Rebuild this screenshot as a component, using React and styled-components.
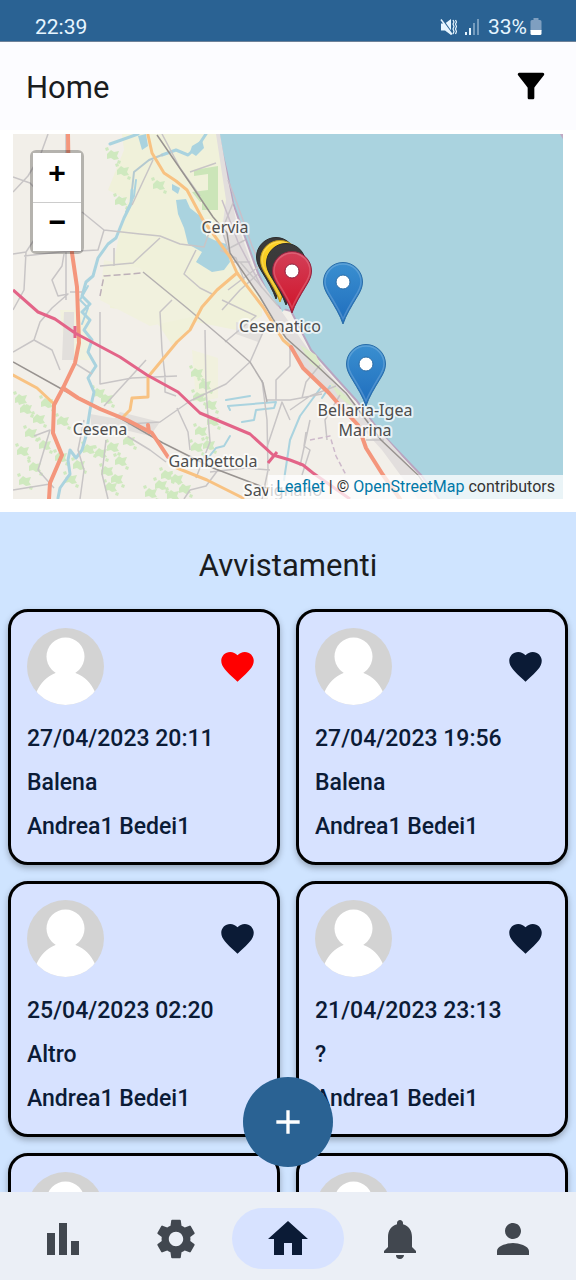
import React from "react";
import styled, { createGlobalStyle } from "styled-components";
import {
  MdAdd,
  MdBarChart,
  MdFavorite,
  MdFilterAlt,
  MdHome,
  MdNotifications,
  MdPerson,
  MdSettings,
} from "react-icons/md";

const GlobalStyle = createGlobalStyle`
  *, *::before, *::after { box-sizing: border-box; }
  body {
    margin: 0;
    font-family: Roboto, "Noto Sans", sans-serif;
    color: #1a1c1e;
    background: #fff;
  }
  button { font: inherit; border: 0; padding: 0; background: none; cursor: pointer; }
  h1, h2, p, ul { margin: 0; padding: 0; font-weight: 400; }
`;

const Screen = styled.div`
  position: relative;
  display: flex;
  flex-direction: column;
  height: 100vh;
  overflow: hidden;
`;

const StatusBar = styled.div`
  display: flex;
  flex: none;
  align-items: flex-end;
  justify-content: space-between;
  height: 42px;
  padding: 0 34px 3px 35px;
  background: #2a6293;
  border-bottom: 1px solid #6d8299;
  color: #e6f5ff;
  font-size: 21px;
  line-height: 22px;
`;

const StatusIcons = styled.div`
  display: flex;
  align-items: center;
  gap: 8px;
`;

const BatteryLevel = styled.span`
  display: flex;
  align-items: center;
  gap: 3px;
`;

const TopBar = styled.header`
  display: flex;
  flex: none;
  align-items: center;
  justify-content: space-between;
  height: 88px;
  padding: 0 24px 0 26px;
  background: #fcfcff;
`;

const Title = styled.h1`
  padding-top: 4px;
  font-size: 31px;
  line-height: 40px;
`;

const IconButton = styled.button`
  display: flex;
  align-items: center;
  justify-content: center;
  width: ${({ $size }) => $size}px;
  height: ${({ $size }) => $size}px;
  color: ${({ $color }) => $color};
`;

const MapPanel = styled.section`
  flex: none;
  padding: 4px 13px 13px;
  background: #fff;
`;

const MapFrame = styled.div`
  position: relative;
  overflow: hidden;
  background: #aad3df;
`;

const MapDrawing = styled.svg`
  display: block;
  width: 100%;
  height: auto;
`;

const MapLabel = styled.text`
  font-family: "Noto Sans", sans-serif;
  font-size: 16px;
  fill: #4d4d4d;
  stroke: rgba(255, 255, 255, 0.7);
  stroke-width: 4px;
  stroke-linejoin: round;
  paint-order: stroke;
  text-anchor: middle;
`;

const ZoomControl = styled.div`
  position: absolute;
  top: 16px;
  left: 17px;
  display: flex;
  flex-direction: column;
  border: 3px solid rgba(0, 0, 0, 0.25);
  border-radius: 6px;
  background-clip: padding-box;
`;

const ZoomButton = styled.button`
  && {
    width: 48px;
    height: 49px;
    padding-bottom: 6px;
    background: #fff;
    color: #000;
    font: bold 30px/40px "Liberation Mono", monospace;
  }
  & + & {
    border-top: 1px solid #ccc;
  }
`;

const Attribution = styled.div`
  position: absolute;
  right: 0;
  bottom: 0;
  padding: 0 8px;
  background: rgba(255, 255, 255, 0.75);
  color: #333;
  font-size: 16px;
  line-height: 24px;
  white-space: nowrap;

  a {
    color: #0078a8;
    text-decoration: none;
  }
`;

const Sightings = styled.main`
  flex: 1;
  min-height: 0;
  overflow-y: auto;
  scrollbar-width: none;
  padding: 32px 8px 16px;
  background: #cfe4ff;
`;

const SectionTitle = styled.h2`
  font-size: 31px;
  line-height: 44px;
  text-align: center;
`;

const CardGrid = styled.ul`
  display: grid;
  grid-template-columns: repeat(2, minmax(0, 1fr));
  gap: 16px;
  margin-top: 21px;
  list-style: none;
`;

const Card = styled.li`
  padding: 16px 16px 13px;
  border: 3px solid #000;
  border-radius: 20px;
  background: #d7e2ff;
  box-shadow: 0 3px 6px rgba(0, 0, 0, 0.28);
  color: #0b1b36;
`;

const CardTop = styled.div`
  display: flex;
  align-items: center;
  justify-content: space-between;
  margin-bottom: 12px;
`;

const CardLine = styled.p`
  font-size: 23px;
  font-weight: 500;
  line-height: 44px;
`;

const AddButton = styled.button`
  && {
    position: absolute;
    bottom: 113px;
    left: 50%;
    display: flex;
    align-items: center;
    justify-content: center;
    width: 90px;
    height: 90px;
    margin-left: -45px;
    border-radius: 50%;
    background: #2a6293;
    color: #fff;
  }
`;

const BottomNav = styled.nav`
  display: flex;
  flex: none;
  align-items: flex-start;
  height: 88px;
  padding: 16px 7px 0;
  background: #ebeff6;
`;

const NavButton = styled.button`
  && {
    display: flex;
    flex: 1;
    align-items: center;
    justify-content: center;
    height: 61px;
    border-radius: 31px;
    background: ${({ $active }) => ($active ? "#d7e2ff" : "transparent")};
    color: ${({ $active }) => ($active ? "#0b1b36" : "#41474f")};
  }
`;

const sightings = [
  { id: 1, date: "27/04/2023 20:11", kind: "Balena", author: "Andrea1 Bedei1", liked: true },
  { id: 2, date: "27/04/2023 19:56", kind: "Balena", author: "Andrea1 Bedei1" },
  { id: 3, date: "25/04/2023 02:20", kind: "Altro", author: "Andrea1 Bedei1" },
  { id: 4, date: "21/04/2023 23:13", kind: "?", author: "Andrea1 Bedei1" },
  { id: 5, date: "", kind: "", author: "" },
  { id: 6, date: "", kind: "", author: "" },
];

const navItems = [
  { label: "Statistiche", Icon: MdBarChart },
  { label: "Impostazioni", Icon: MdSettings },
  { label: "Home", Icon: MdHome, active: true },
  { label: "Notifiche", Icon: MdNotifications },
  { label: "Profilo", Icon: MdPerson },
];

function MuteIcon() {
  return (
    <svg width="17" height="18" viewBox="0 0 17 18" fill="none" aria-hidden="true">
      <path d="M1 5.500h4l6-4.500v16L5 12.500H1z" fill="#e6f5ff" />
      <path d="M2 1 12 15" stroke="#2a6293" strokeWidth="1.500" />
      <path d="M1 1.500l11 15" stroke="#e6f5ff" strokeWidth="1.500" />
      <path d="M13 2l1 2-1 2 1 2.500-1 2.500 1 2.500-1 2.500M15.500 2l1 2-1 2 1 2.500-1 2.500 1 2.500-1 2.500" stroke="#e6f5ff" strokeWidth="1.200" />
    </svg>
  );
}

function SignalIcon() {
  return (
    <svg width="15" height="18" viewBox="0 0 15 18" fill="#e6f5ff" aria-hidden="true">
      <path d="M0 14h2v3H0zM4 10h2v7H4z" />
      <path d="M8 5h2v12H8zM12 1h2v16h-2z" opacity=".4" />
    </svg>
  );
}

function BatteryIcon() {
  return (
    <svg width="12" height="18" viewBox="0 0 12 18" aria-hidden="true">
      <path d="M3.500 0h5v2H10a1.500 1.500 0 0 1 1.500 1.500V13H.5V3.500A1.500 1.500 0 0 1 2 2h1.500z" fill="#7f9fc0" />
      <path d="M.5 12h11v3.500A1.500 1.500 0 0 1 10 17H2a1.500 1.500 0 0 1-1.500-1.500z" fill="#fff" />
    </svg>
  );
}

function Avatar() {
  const clip = React.useId();
  return (
    <svg width="77" height="77" viewBox="0 0 77 77" aria-hidden="true">
      <clipPath id={clip}>
        <circle cx="38.5" cy="38.5" r="38.5" />
      </clipPath>
      <g clipPath={`url(#${clip})`}>
        <path d="M0 0h77v77H0z" fill="#d3d3d3" />
        <circle cx="38.5" cy="28.500" r="19" fill="#fff" />
        <path d="M28.500 42h20v3C58 48.500 64 55 68 64L60 78H17L9.500 64C13.500 55 19.500 48.500 28.500 45z" fill="#fff" />
      </g>
    </svg>
  );
}

const pinColors = {
  blue: ["#3a8fd0", "#1f6dbd", "#2a6da8"],
  red: ["#d33f58", "#d0142a", "#8e2340"],
  black: ["#3c3c3c", "#333333", "#2c2c2c"],
  yellow: ["#ffd326", "#e8bf1c", "#c19c1c"],
};

function Pin({ x, y, color }) {
  return (
    <g transform={`translate(${x} ${y})`}>
      <path
        d="M0 62C-3 53-8 45-14 35C-17.500 29.500-19.500 25-19.500 20A19.500 19.500 0 0 1 19.500 20C19.500 25 17.500 29.500 14 35C8 45 3 53 0 62Z"
        fill={`url(#pin-${color})`}
        stroke={pinColors[color][2]}
        strokeWidth="1"
      />
      <path
        d="M0 57C-3 50-7 43-12.500 34C-16 28.500-18 24.500-18 20A18 18 0 0 1 18 20C18 24.500 16 28.500 12.500 34C7 43 3 50 0 57Z"
        fill="none"
        stroke="#fff"
        strokeOpacity={color === "black" ? 0 : 0.18}
        strokeWidth="1.500"
      />
      <circle cy="20" r="7" fill="#fff" stroke={pinColors[color][2]} strokeWidth="1" />
    </g>
  );
}

const woods = [
  [25, 408], [38, 418], [30, 432], [44, 444], [22, 450], [34, 466], [24, 480], [46, 402], [70, 478],
  [78, 464], [88, 448], [100, 452], [112, 446], [120, 460], [106, 470], [116, 478], [128, 440],
  [160, 484], [150, 492], [172, 494], [184, 488], [166, 474], [62, 420], [98, 392], [106, 398],
  [196, 372], [204, 384], [198, 396], [210, 404], [212, 420], [200, 430], [208, 444], [196, 446],
  [122, 170], [112, 154], [158, 184], [120, 200], [176, 478], [110, 486], [20, 398], [60, 456],
];

function CoastMap() {
  return (
    <MapDrawing viewBox="13 134 550 365" role="img" aria-label="Mappa della costa adriatica">
      <defs>
        {Object.entries(pinColors).map(([name, [top, bottom]]) => (
          <linearGradient key={name} id={`pin-${name}`} x1="0" y1="0" x2="0" y2="1">
            <stop offset="0" stopColor={top} />
            <stop offset="1" stopColor={bottom} />
          </linearGradient>
        ))}
      </defs>
      <path d="M13 134h550v365H13z" fill="#aad3df" />
      <path d="M564 134h-4l4 7z" fill="#c2a9c4" />
      <path
        d="M10 130H218L222 152L227 173L233 203L245 237L258 273L270 298L280 308L291 311L311 350L336 378L356 400L381 433L399 452L421 475L442 503H10Z"
        fill="#f2efe9"
        stroke="#b9a5c0"
        strokeWidth="2"
      />
      {/* cultivated plain between the river and the beach */}
      <path
        d="M122 134H218L222 160L228 190L220 240L232 262L262 300L262 316L236 330L196 322L172 345L150 312L110 308L112 268L120 232L128 200L108 190L124 150Z"
        fill="#f0f1da"
      />
      <path d="M104 260L140 268L196 316L150 326L100 300ZM60 310h30v50H66zM192 350l26 8v40l-22 4z" fill="#f1f1de" />
      <path d="M194 170l24-4v32l-18 4-8-10 16-2v-16l-14 2zM202 200l16-2v12h-16z" fill="#cbe5b8" />
      <path d="M216 134h4L228 180L236 220L254 270L282 312L310 352L350 398L400 454L434 499H418L382 450L340 404L300 362L262 300L232 258L222 230L226 200Z" fill="#e2dedd" />
      <path d="M300 345l16 10 8 18-14-10zM330 382l16 14 10 14-18-14z" fill="#dcebc8" />
      <path d="M64 312h10v48H62zM120 412l40 10-10 14-42-10zM236 322l30 6-8 14-22-8zM90 414l34 6v12l-32-2z" fill="#e2dfdc" />
      {woods.map(([x, y]) => (
        <path
          key={`${x}-${y}`}
          d={`M${x - 5} ${y}l4-4 3 2 5-1-2 5 2 3-5 1-3-2-4 1zM${x + 6} ${y + 6}l3 1-1 3-3-1zM${x - 7} ${y - 6}l3-1 1 3-3 1z`}
          fill="#cfe9bf"
        />
      ))}
      {/* salt pans and lakes */}
      <path
        d="M176 200L186 199L190 208L200 216L206 226L206 236L214 240L226 244L230 262L224 270L212 272L196 262L202 252L188 244L184 228L178 214Z"
        fill="#aad3df"
      />
      <path d="M138 136l8-2 2 12-6 4zM172 184l8 4-2 6-6-4zM192 146l10-6 2 8-8 8-6-4zM278 298l10 8-6 6z" fill="#aad3df" />
      <g fill="none" stroke="#aad3df" strokeLinecap="round" strokeLinejoin="round">
        <path d="M110 144L138 134M162 155L176 150L188 155L198 146L206 134" strokeWidth="3" />
        <path d="M162 155L149 160L134 172L132 190" stroke="#b4c9d0" strokeWidth="2" />
        <path d="M132 190L131 204L124 218L116 238L108 244L98 258L93 276L86 282L82 296L90 304L82 312L90 320L84 330L92 340L88 352L96 366L88 378L94 392L90 410L86 436L82 450L76 458L70 450L68 460L70 474L60 488L58 498" strokeWidth="3" />
        <path d="M126 212L134 196L136 180M88 286L80 300L88 308L82 324" strokeWidth="2" />
        <path d="M226 400L250 396M230 410L228 406L276 402L274 408L256 410L254 420L242 422M230 436L224 446L216 448L208 458M284 480L290 440L300 416L322 386M322 398L330 386" strokeWidth="2" />
      </g>
      {/* minor roads */}
      <g fill="none" stroke="#c8c5c6" strokeWidth="1.500" strokeLinejoin="round">
        <path d="M48 134L40 156L28 176L13 192M13 177L30 183L44 198L34 240L26 252L13 254M26 252L24 290L13 310M24 256L60 252L98 250L104 230M82 212L104 230L140 234L160 236L180 244L204 247L210 230M196 250L184 274L200 288L212 294" />
        <path d="M66 134V300M70 292H82M64 254L62 266L52 280L58 296L68 294L52 308L40 322L34 340L13 352M34 340L52 350L60 370M76 364L92 374M100 312V384L132 378L177 376M114 248V266M100 266L133 263L160 238M172 300L160 312L162 350L165 376L165 392L176 396" />
        <path d="M190 172L216 163M153 160L132 205M162 134L180 168L200 196M233 203L222 230L232 262L250 262M245 240L226 250M258 274L240 290L222 310M240 262L278 306M228 290L262 264" />
        <path d="M225 342L256 316L222 300M205 330L206 390L210 442L196 478M250 362L226 384L190 401L160 422L128 424M104 406L146 360M250 362L264 330L274 322M262 380L267 420L268 470L262 499M177 408L188 432L190 450M267 400H290L322 394M290 420L282 402L266 450M276 400L276 380L290 366L290 345M290 410L310 396L336 386M306 432L304 446L310 450L302 475M310 420L300 466M34 436L50 430L38 470L54 488M84 420L78 450L84 470L80 499M106 440L102 474L108 499M127 436L150 450L166 462M210 472L246 468L270 470M13 490L50 484M218 470L206 486L190 490L184 499M340 395L325 420L327 440M366 440L384 440M220 250L236 258L244 280M320 365L306 382L302 398" />
        <path d="M228 180l10 26 14 40 20 44M222 200l16 42 24 46" stroke="#c9bfc9" />
        <path d="M310 440L330 436L336 456L346 475" strokeDasharray="5 3" stroke="#cdb9cb" />
        <path d="M100 296L104 276L142 273" strokeDasharray="7 3" stroke="#bdb0b8" />
      </g>
      {/* railways */}
      <g fill="none" stroke="#989390" strokeWidth="1.500" strokeLinejoin="round">
        <path d="M13 362L67 392L120 418L163 443L213 468L263 487L290 494" />
        <path d="M157 135L190 183L213 217L227 233L230 253L260 297L273 319L286 338L316 365L346 393L381 440L418 475L430 492" />
        <path d="M143 272L187 308L227 342L250 362L263 383L267 402" stroke="#b4b0b0" />
      </g>
      {/* provincial roads */}
      <g fill="none" stroke="#f8c282" strokeWidth="3" strokeLinejoin="round" strokeLinecap="round">
        <path d="M148 135L152 153L164 173L176 181L187 190L203 220L230 257L237 273L263 307L283 340L291 347" />
        <path d="M237 273L217 290L202 307L190 330L177 342L148 377V397L132 398L130 410L122 418M13 375L37 388L53 403M177 468L207 480L227 490L243 498" />
      </g>
      {/* trunk roads */}
      <g fill="none" stroke="#f4967c" strokeWidth="4" strokeLinejoin="round" strokeLinecap="round">
        <path d="M68 134L69 200L72 253L77 287L79 343L75 363L63 388L54 405L53 433L62 455L50 483L49 499" />
        <path d="M63 388L78 398L100 409L127 420L152 433L168 457M148 425L149 432M291 347L303 368L329 393L342 408L358 425L366 448L383 475L400 499" />
      </g>
      {/* motorway */}
      <path
        d="M13 290L38 312L55 319L75 333L120 357L147 375L178 392L200 413L250 434L273 455L290 460L303 465L313 473L350 499M75 326V338M277 452L268 463"
        fill="none"
        stroke="#e36488"
        strokeWidth="3"
        strokeLinejoin="round"
      />
      <MapLabel x="225" y="233">Cervia</MapLabel>
      <MapLabel x="280" y="332">Cesenatico</MapLabel>
      <MapLabel x="100" y="435">Cesena</MapLabel>
      <MapLabel x="213" y="467">Gambettola</MapLabel>
      <MapLabel x="365" y="416">Bellaria-Igea</MapLabel>
      <MapLabel x="365" y="436">Marina</MapLabel>
      <MapLabel x="283" y="496">Savignano</MapLabel>
      <Pin x={276} y={237} color="black" />
      <Pin x={280} y={240} color="yellow" />
      <Pin x={286} y={243} color="black" />
      <Pin x={292} y={251} color="red" />
      <Pin x={343} y={262} color="blue" />
      <Pin x={366} y={344} color="blue" />
    </MapDrawing>
  );
}

export default function App() {
  return (
    <>
      <GlobalStyle />
      <Screen>
        <StatusBar>
          <span>22:39</span>
          <StatusIcons>
            <MuteIcon />
            <SignalIcon />
            <BatteryLevel>
              33%
              <BatteryIcon />
            </BatteryLevel>
          </StatusIcons>
        </StatusBar>

        <TopBar>
          <Title>Home</Title>
          <IconButton $size={42} $color="#000" aria-label="Filtra">
            <MdFilterAlt size={40} />
          </IconButton>
        </TopBar>

        <MapPanel>
          <MapFrame>
            <CoastMap />
            <ZoomControl>
              <ZoomButton aria-label="Zoom in">+</ZoomButton>
              <ZoomButton aria-label="Zoom out">−</ZoomButton>
            </ZoomControl>
            <Attribution>
              <a href="#leaflet">Leaflet</a> | © <a href="#openstreetmap">OpenStreetMap</a> contributors
            </Attribution>
          </MapFrame>
        </MapPanel>

        <Sightings>
          <SectionTitle>Avvistamenti</SectionTitle>
          <CardGrid>
            {sightings.map(({ id, date, kind, author, liked }) => (
              <Card key={id}>
                <CardTop>
                  <Avatar />
                  <IconButton $size={48} $color={liked ? "#ff0000" : "#0b1b36"} aria-label="Mi piace">
                    <MdFavorite size={39} />
                  </IconButton>
                </CardTop>
                <CardLine>{date}</CardLine>
                <CardLine>{kind}</CardLine>
                <CardLine>{author}</CardLine>
              </Card>
            ))}
          </CardGrid>
        </Sightings>

        <AddButton aria-label="Aggiungi avvistamento">
          <MdAdd size={40} />
        </AddButton>

        <BottomNav>
          {navItems.map(({ label, Icon, active }) => (
            <NavButton key={label} $active={active} aria-label={label}>
              <Icon size={48} />
            </NavButton>
          ))}
        </BottomNav>
      </Screen>
    </>
  );
}
